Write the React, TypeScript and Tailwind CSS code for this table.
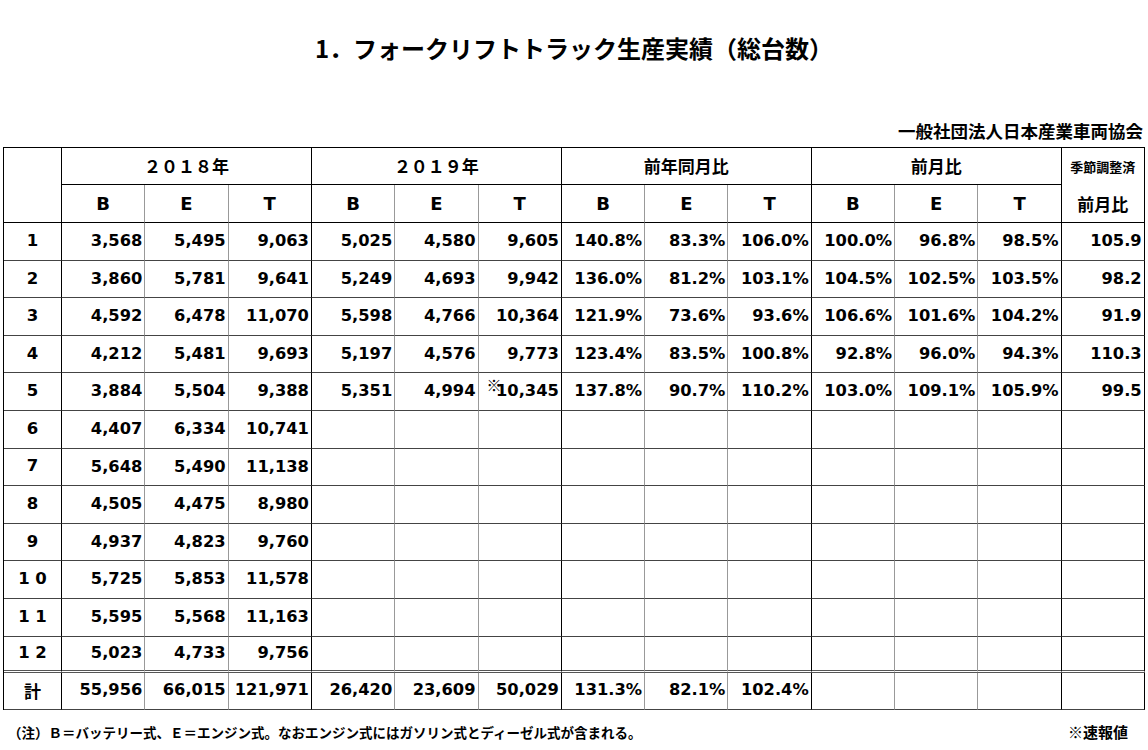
import React from "react";

const NUM = "font-['DejaVu_Sans','Noto_Sans_CJK_JP',sans-serif]";
const JP = "font-['Noto_Sans_CJK_JP','Noto_Sans',sans-serif]";

const rows: [string, string[]][] = [
  ["1", ["3,568", "5,495", "9,063", "5,025", "4,580", "9,605", "140.8%", "83.3%", "106.0%", "100.0%", "96.8%", "98.5%", "105.9"]],
  ["2", ["3,860", "5,781", "9,641", "5,249", "4,693", "9,942", "136.0%", "81.2%", "103.1%", "104.5%", "102.5%", "103.5%", "98.2"]],
  ["3", ["4,592", "6,478", "11,070", "5,598", "4,766", "10,364", "121.9%", "73.6%", "93.6%", "106.6%", "101.6%", "104.2%", "91.9"]],
  ["4", ["4,212", "5,481", "9,693", "5,197", "4,576", "9,773", "123.4%", "83.5%", "100.8%", "92.8%", "96.0%", "94.3%", "110.3"]],
  ["5", ["3,884", "5,504", "9,388", "5,351", "4,994", "10,345", "137.8%", "90.7%", "110.2%", "103.0%", "109.1%", "105.9%", "99.5"]],
  ["6", ["4,407", "6,334", "10,741"]],
  ["7", ["5,648", "5,490", "11,138"]],
  ["8", ["4,505", "4,475", "8,980"]],
  ["9", ["4,937", "4,823", "9,760"]],
  ["1 0", ["5,725", "5,853", "11,578"]],
  ["1 1", ["5,595", "5,568", "11,163"]],
  ["1 2", ["5,023", "4,733", "9,756"]],
];

const total = ["55,956", "66,015", "121,971", "26,420", "23,609", "50,029", "131.3%", "82.1%", "102.4%"];

// black line after month column, after each group, and the outer right edge
function rightBorder(i: number) {
  return [0, 3, 6, 9, 12, 13].includes(i) ? "border-r-black" : "border-r-[#999]";
}

function Row({ label, values, last, isTotal }: { label: string; values: string[]; last?: boolean; isTotal?: boolean }) {
  const bottom = last ? "border-b-[3px] border-double border-b-[#555]" : "border-b border-b-[#444]";
  const h = isTotal ? "h-[37px]" : last ? "h-[36px]" : "h-[37.6px]";
  return (
    <tr>
      <td
        className={`${h} border-r ${rightBorder(0)} ${bottom} text-center font-bold ${isTotal ? `text-[17px] ${JP}` : `text-[16.5px] ${NUM}`} whitespace-pre`}
      >
        {label}
      </td>
      {Array.from({ length: 13 }).map((_, j) => {
        const v = values[j] ?? "";
        const mark = label === "5" && j === 5;
        return (
          <td
            key={j}
            className={`${h} relative border-r ${rightBorder(j + 1)} ${bottom} text-right pr-[2px] font-bold text-[16.3px] ${NUM}`}
          >
            {mark ? (
              <span className={`absolute left-[8px] top-[1px] text-[15px] font-normal ${JP}`}>※</span>
            ) : null}
            {v}
          </td>
        );
      })}
    </tr>
  );
}

export default function App() {
  const groups = ["２０１８年", "２０１９年", "前年同月比", "前月比"];
  return (
    <div className={`w-[1148px] h-[750px] bg-white text-black ${JP}`}>
      <div className="mt-[33px] h-[30px] leading-[30px] text-center text-[24px] font-bold">
        1．フォークリフトトラック生産実績（総台数）
      </div>
      <div className="mt-[58px] h-[20px] leading-[20px] text-right pr-[5px] text-[17.5px] font-bold">
        一般社団法人日本産業車両協会
      </div>

      <table className="ml-[3px] mt-[6px] table-fixed border-separate border-spacing-0 border-l border-t border-black w-[1141px]">
        <colgroup>
          <col className="w-[58px]" />
          {Array.from({ length: 12 }).map((_, i) => (
            <col key={i} className="w-[83.3px]" />
          ))}
          <col className="w-[83px]" />
        </colgroup>
        <thead>
          <tr>
            <th rowSpan={2} className="border-r border-b border-black" />
            {groups.map((g) => (
              <th
                key={g}
                colSpan={3}
                className="h-[37px] border-r border-b border-black text-center text-[17px] font-bold"
              >
                {g}
              </th>
            ))}
            <th className="h-[37px] border-r border-black text-center text-[13px] font-bold">季節調整済</th>
          </tr>
          <tr>
            {Array.from({ length: 12 }).map((_, i) => (
              <th
                key={i}
                className={`h-[38px] border-r ${rightBorder(i + 1)} border-b border-b-black text-center text-[18px] font-bold ${NUM}`}
              >
                {["B", "E", "T"][i % 3]}
              </th>
            ))}
            <th className="h-[38px] border-r border-b border-black text-center text-[17px] font-bold">前月比</th>
          </tr>
        </thead>
        <tbody>
          {rows.map(([label, values], i) => (
            <Row key={label} label={label} values={values} last={i === rows.length - 1} />
          ))}
          <Row label="計" values={total} isTotal />
        </tbody>
      </table>

      <div className="mt-[13px] flex justify-between pl-[8px] pr-[20px] text-[13.5px] font-bold leading-[18px]">
        <span>（注）Ｂ＝バッテリー式、Ｅ＝エンジン式。なおエンジン式にはガソリン式とディーゼル式が含まれる。</span>
        <span className="text-[15px]">※速報値</span>
      </div>
    </div>
  );
}
